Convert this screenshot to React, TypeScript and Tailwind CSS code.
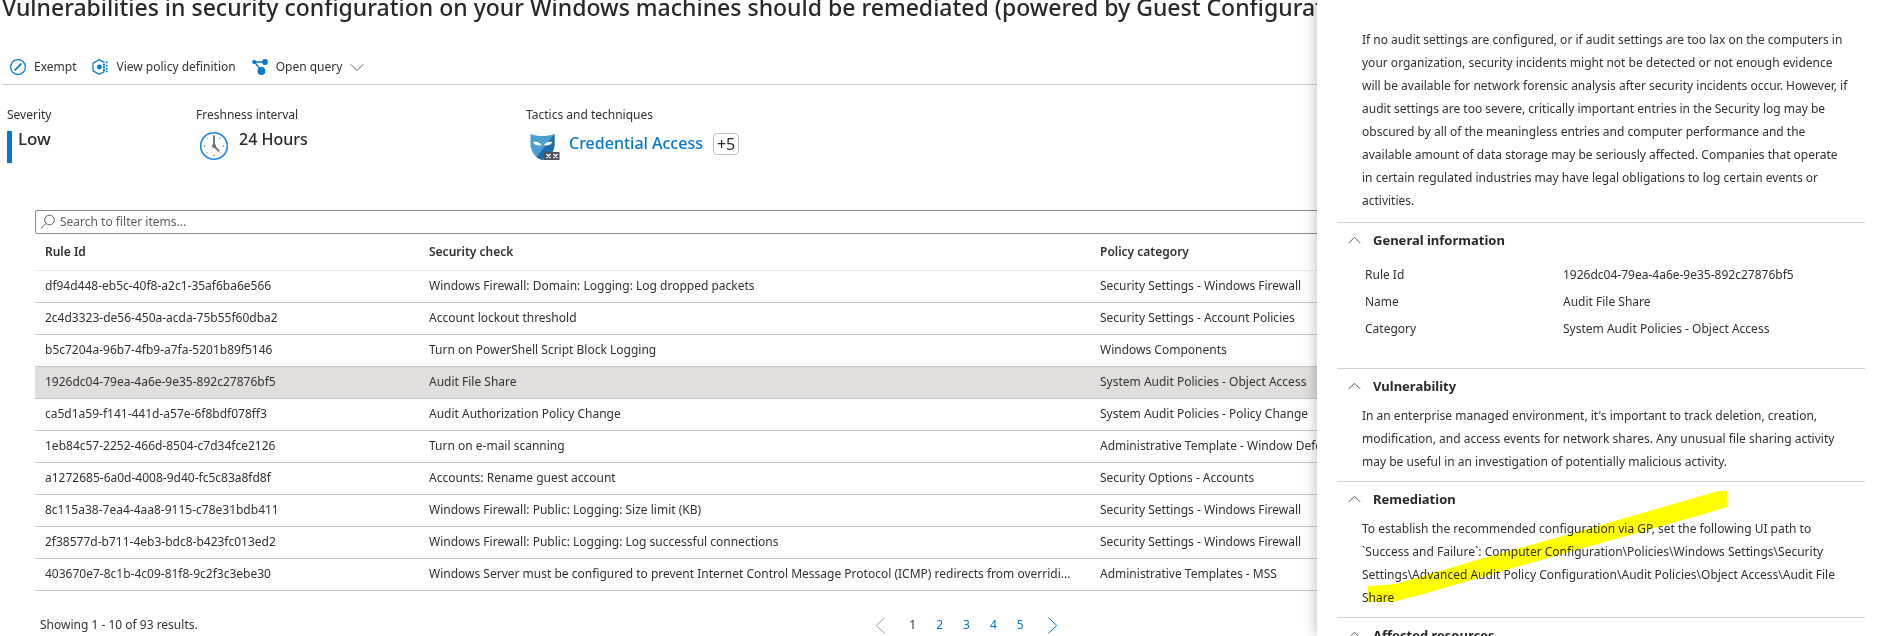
import React, { useState } from 'react';

const rules = [
  { id: 'df94d448-eb5c-40f8-a2c1-35af6ba6e566', check: 'Windows Firewall: Domain: Logging: Log dropped packets', category: 'Security Settings - Windows Firewall' },
  { id: '2c4d3323-de56-450a-acda-75b55f60dba2', check: 'Account lockout threshold', category: 'Security Settings - Account Policies' },
  { id: 'b5c7204a-96b7-4fb9-a7fa-5201b89f5146', check: 'Turn on PowerShell Script Block Logging', category: 'Windows Components' },
  { id: '1926dc04-79ea-4a6e-9e35-892c27876bf5', check: 'Audit File Share', category: 'System Audit Policies - Object Access' },
  { id: 'ca5d1a59-f141-441d-a57e-6f8bdf078ff3', check: 'Audit Authorization Policy Change', category: 'System Audit Policies - Policy Change' },
  { id: '1eb84c57-2252-466d-8504-c7d34fce2126', check: 'Turn on e-mail scanning', category: 'Administrative Template - Window Defender' },
  { id: 'a1272685-6a0d-4008-9d40-fc5c83a8fd8f', check: 'Accounts: Rename guest account', category: 'Security Options - Accounts' },
  { id: '8c115a38-7ea4-4aa8-9115-c78e31bdb411', check: 'Windows Firewall: Public: Logging: Size limit (KB)', category: 'Security Settings - Windows Firewall' },
  { id: '2f38577d-b711-4eb3-bdc8-b423fc013ed2', check: 'Windows Firewall: Public: Logging: Log successful connections', category: 'Security Settings - Windows Firewall' },
  { id: '403670e7-8c1b-4c09-81f8-9c2f3c3ebe30', check: 'Windows Server must be configured to prevent Internet Control Message Protocol (ICMP) redirects from overridi...', category: 'Administrative Templates - MSS' },
];

const ExemptIcon = () => (
  <svg width="16" height="16" viewBox="0 0 16 16" fill="none" stroke="#0078d4">
    <circle cx="8" cy="8" r="7.4" strokeWidth="1.2" />
    <path d="M4.6 11.4 11.4 4.6" strokeWidth="1.7" />
  </svg>
);

const PolicyIcon = () => (
  <svg width="16" height="16" viewBox="0 0 16 16" fill="none">
    <path d="M12.4 3.4 7.2.7 1 4.2v7.6l6.2 3.5 5.2-2.7" stroke="#0078d4" strokeWidth="1.2" />
    <circle cx="7.4" cy="8" r="2.4" fill="#0078d4" />
    <path d="M11 4.6h1.9v1.9H11zM11 7.3h1.9v1.9H11zM11 10h1.9v1.9H11zM13.8 2.6h1.7v1.7h-1.7zM13.8 5.8h1.7v1.7h-1.7zM13.8 8.8h1.7v1.7h-1.7zM13.8 11.6h1.7v1.7h-1.7z" fill="#0078d4" />
  </svg>
);

const QueryIcon = () => (
  <svg width="16" height="16" viewBox="0 0 16 16" fill="#0078d4">
    <path d="M2 3h11M2.5 3 9.5 12" stroke="#0078d4" strokeWidth="1.3" />
    <circle cx="2.2" cy="3" r="2.1" />
    <circle cx="13" cy="3" r="2.9" />
    <circle cx="9.4" cy="12" r="3.9" />
  </svg>
);

const ClockIcon = () => (
  <svg width="30" height="30" viewBox="0 0 30 30" fill="none">
    <circle cx="15" cy="15" r="13.3" fill="#fff" stroke="#1f86dc" strokeWidth="1.6" />
    <g fill="#a3a3a3">
      <circle cx="21" cy="7.2" r=".7" />
      <circle cx="8.6" cy="7.2" r=".7" />
      <circle cx="5.5" cy="15" r=".9" />
      <circle cx="24.5" cy="15" r=".9" />
      <circle cx="8" cy="21.5" r=".7" />
      <circle cx="21" cy="21.5" r=".7" />
      <circle cx="15" cy="24.5" r=".9" />
    </g>
    <path d="M15 4.5V15l5 5.4" stroke="#707070" strokeWidth="1.9" />
    <circle cx="15" cy="15" r="2.1" fill="#707070" />
  </svg>
);

const MaskIcon = () => (
  <svg width="30" height="30" viewBox="0 0 30 30">
    <path d="M.5 1c4 1.5 8 2 12 2s8-.5 12-2v10c0 8-5 14-12 16-7-2-12-8-12-16z" fill="#4b9fd3" />
    <path d="M24.5 1v10c0 8-5 14-12 16-2.2-.6-4.3-1.7-6-3z" fill="#1f6cab" />
    <path d="M3 9c3.5-.6 6.5.3 8.500 3-3 1.200-7 .3-8.500-3zM22.500 9c-3.500-.6-6.500.3-8.500 3 3 1.200 7 .3 8.500-3z" fill="#fff" />
    <path d="M14 19h15.500v8H14z" fill="#4d5361" />
    <path d="m16.500 21 4 4m0-4-4 4M23.500 21l4 4m0-4-4 4" stroke="#fff" strokeWidth="1.400" />
  </svg>
);

const SearchIcon = () => (
  <svg width="16" height="16" viewBox="0 0 16 16" fill="none" stroke="#605e5c">
    <circle cx="9.500" cy="6" r="4.800" />
    <path d="M6.100 9.400 1 14.500" />
  </svg>
);

const ChevronIcon = ({ points, size }: { points: string; size: number }) => (
  <svg width={size} height={size} viewBox="0 0 16 16" fill="none" stroke="currentColor">
    <polyline points={points} vectorEffect="non-scaling-stroke" />
  </svg>
);

const Section = ({ title, children }: { title: string; children?: React.ReactNode }) => {
  const [open, setOpen] = useState(true);

  return (
    <section className="relative border-t border-[#d2d0ce] pl-[25px]">
      <button onClick={() => setOpen(!open)} className="-ml-3.5 flex h-[35px] items-center gap-3 text-[#292827]">
        <span className={open ? 'text-[#605e5c]' : 'rotate-180 text-[#605e5c]'}>
          <ChevronIcon points="1,11 8,4 15,11" size={13} />
        </span>
        <h2 className="text-[13px] font-bold">{title}</h2>
      </button>
      {open && children}
    </section>
  );
};

const App = () => {
  const [filter, setFilter] = useState('');
  const [page, setPage] = useState(1);
  const [selected, setSelected] = useState('1926dc04-79ea-4a6e-9e35-892c27876bf5');

  const visible = rules.filter((r) => `${r.id} ${r.check} ${r.category}`.toLowerCase().includes(filter.toLowerCase()));

  return (
    <div className="relative h-screen overflow-hidden bg-white font-['Noto_Sans','Open_Sans',sans-serif] text-xs text-[#323130]">
      <main>
        <h1 className="-mt-[9px] mb-[25px] pl-0.5 text-[23px] leading-8 font-medium whitespace-nowrap text-[#292827]">
          Vulnerabilities in security configuration on your Windows machines should be remediated (powered by Guest Configuration)
        </h1>

        <div className="ml-0.5 flex h-[37px] items-center gap-4 border-b border-[#d2d0ce] pt-0.5 pl-2">
          <button className="flex items-center gap-2">
            <ExemptIcon />
            Exempt
          </button>
          <button className="flex items-center gap-2">
            <PolicyIcon />
            View policy definition
          </button>
          <button className="flex items-center gap-2">
            <QueryIcon />
            Open query
            <span className="text-[#605e5c]">
              <ChevronIcon points="1,5 8,12 15,5" size={14} />
            </span>
          </button>
        </div>

        <div className="flex pt-5 pl-[7px] leading-5">
          <div className="w-[189px]">
            <div>Severity</div>
            <div className="mt-1.5 h-8 border-l-[5px] border-[#0078d4] pl-1.5 text-[17px] leading-4 font-medium text-[#292827]">Low</div>
          </div>
          <div className="w-[330px]">
            <div>Freshness interval</div>
            <div className="mt-1.5 flex pl-[3px]">
              <ClockIcon />
              <span className="pl-2.5 text-base leading-4 font-medium text-[#292827]">24 Hours</span>
            </div>
          </div>
          <div>
            <div>Tactics and techniques</div>
            <div className="mt-2 flex pl-1">
              <MaskIcon />
              <a href="#credential-access" className="pl-[9px] text-base leading-5 font-medium text-[#0078d4]">Credential Access</a>
              <span className="ml-2.5 h-[22px] rounded border border-[#bebbb8] px-[3px] text-base leading-5 text-[#292827]">+5</span>
            </div>
          </div>
        </div>

        <div className="mt-[47px] pl-[35px]">
          <label className="flex h-6 items-center gap-1 rounded-xs border border-[#8a8886] pl-1">
            <SearchIcon />
            <input
              type="text"
              aria-label="Search to filter items"
              placeholder="Search to filter items..."
              value={filter}
              onChange={(e) => setFilter(e.target.value)}
              className="flex-1 outline-none placeholder:text-[#605e5c]"
            />
          </label>

          <table className="w-full table-fixed border-collapse text-left">
            <thead>
              <tr className="h-9 border-b border-[#edebe9]">
                <th className="w-96 px-2.5 font-semibold">Rule Id</th>
                <th className="w-[671px] px-2.5 font-semibold">Security check</th>
                <th className="px-2.5 font-semibold">Policy category</th>
              </tr>
            </thead>
            <tbody>
              {visible.map((rule) => (
                <tr
                  key={rule.id}
                  onClick={() => setSelected(rule.id)}
                  className={rule.id === selected ? 'h-8 border-b border-[#c8c6c4] bg-[#e1dfdd]' : 'h-8 border-b border-[#c8c6c4]'}
                >
                  <td className="px-2.5">{rule.id}</td>
                  <td className="truncate pl-2.5">{rule.check}</td>
                  <td className="px-2.5">{rule.category}</td>
                </tr>
              ))}
            </tbody>
          </table>

          <div className="mt-[26px] grid grid-cols-[1fr_auto_1fr] items-center pl-[5px]">
            <span>Showing 1 - 10 of 93 results.</span>
            <nav className="ml-4 flex items-center gap-5">
              <button aria-label="Previous page" className="text-[#a19f9d]" onClick={() => setPage(Math.max(1, page - 1))}>
                <ChevronIcon points="12,0.500 4,8 12,15.500" size={17} />
              </button>
              {[1, 2, 3, 4, 5].map((n) => (
                <button key={n} onClick={() => setPage(n)} className={n === page ? 'text-[#323130]' : 'text-[#0078d4]'}>
                  {n}
                </button>
              ))}
              <button aria-label="Next page" className="text-[#0078d4]" onClick={() => setPage(Math.min(5, page + 1))}>
                <ChevronIcon points="4,0.500 12,8 4,15.500" size={17} />
              </button>
            </nav>
          </div>
        </div>
      </main>

      <aside className="absolute inset-y-0 right-0 w-[560px] overflow-hidden bg-white pr-3 pl-5 shadow-[0_0_14px_rgba(0,0,0,0.28)]">
        <p className="pt-7 pr-[15px] pb-2.5 pl-[25px] leading-[23px]">
          If no audit settings are configured, or if audit settings are too lax on the computers in your organization, security
          incidents might not be detected or not enough evidence will be available for network forensic analysis after security
          incidents occur. However, if audit settings are too severe, critically important entries in the Security log may be
          obscured by all of the meaningless entries and computer performance and the available amount of data storage may be
          seriously affected. Companies that operate in certain regulated industries may have legal obligations to log certain
          events or activities.
        </p>

        <Section title="General information">
          <dl className="grid grid-cols-[198px_1fr] pt-[3px] pb-[26px] pl-[3px] leading-[27px]">
            <dt>Rule Id</dt>
            <dd>1926dc04-79ea-4a6e-9e35-892c27876bf5</dd>
            <dt>Name</dt>
            <dd>Audit File Share</dd>
            <dt>Category</dt>
            <dd>System Audit Policies - Object Access</dd>
          </dl>
        </Section>

        <Section title="Vulnerability">
          <p className="pr-4 pb-2 leading-[23px]">
            In an enterprise managed environment, it's important to track deletion, creation, modification, and access events for
            network shares. Any unusual file sharing activity may be useful in an investigation of potentially malicious activity.
          </p>
        </Section>

        <Section title="Remediation">
          <p className="pr-4 pb-2 leading-[23px]">
            To establish the recommended configuration via GP, set the following UI path to `Success and Failure`: Computer
            Configuration\Policies\Windows Settings\Security Settings\Advanced Audit Policy Configuration\Audit Policies\Object
            Access\Audit File Share
          </p>
          {/* marker stroke over the policy path */}
          <svg className="pointer-events-none absolute top-[9px] left-[31px] mix-blend-multiply" width="360" height="112" viewBox="0 0 360 112">
            <path d="M0 95 28 93 116 67 195 45 340 3 350 0h9v16l-19 6-181 51L50 104.500 24 111H0z" fill="#ff0" />
          </svg>
        </Section>

        <Section title="Affected resources" />
      </aside>
    </div>
  );
};

export default App;
